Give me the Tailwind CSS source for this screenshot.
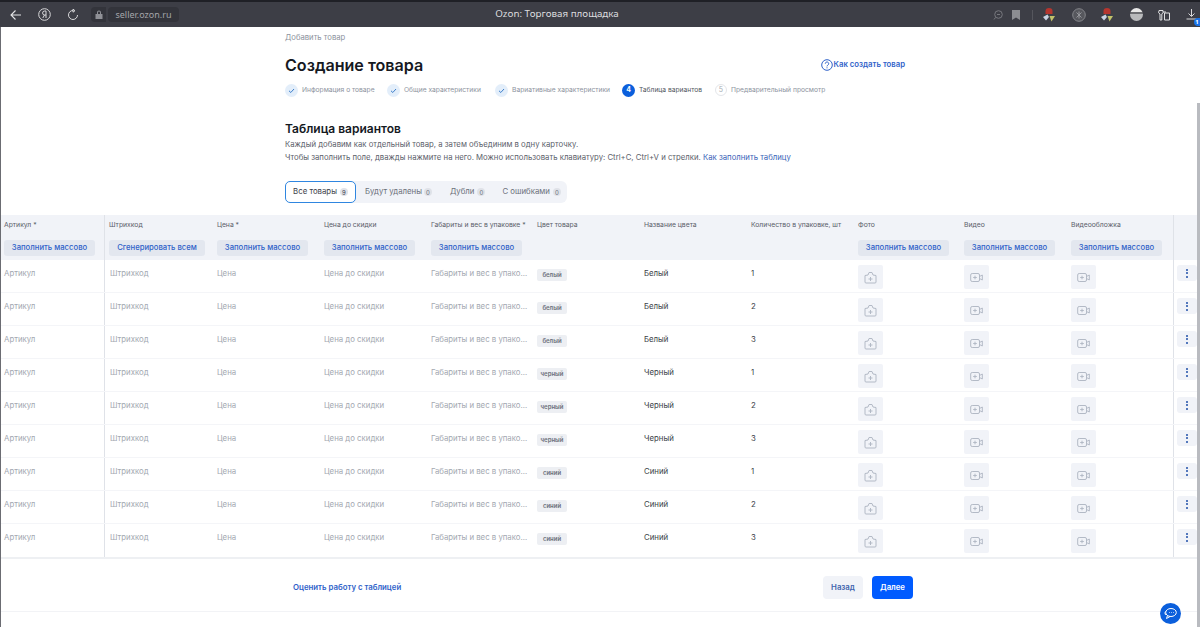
<!DOCTYPE html>
<html lang="ru">
<head>
    <meta charset="UTF-8">
    <script src="https://cdn.jsdelivr.net/npm/@tailwindcss/browser@4"></script>
    <title>Ozon: Торговая площадка</title>
</head>
<body class="h-[627px] w-[1200px] overflow-hidden bg-white font-[Inter,sans-serif] text-[#1b1f27]">
    <!-- browser bar -->
    <header class="flex h-[27px] items-center border-t-2 border-[#1f2026] bg-[#3d3e46] font-['Noto_Sans',sans-serif] text-[#d4d5d8]">
        <div class="flex w-[284px] items-center">
            <svg class="ml-[10px] h-3 w-3" viewBox="0 0 12 12" fill="none" stroke="#e4e4e6" stroke-width="1.1"><path d="M11 6H1M5.500 1.500 1 6l4.500 4.500"/></svg>
            <svg class="ml-[16px] h-[13px] w-[13px]" viewBox="0 0 13 13" fill="none" stroke="#d8d8da"><circle cx="6.500" cy="6.500" r="5.800"/><path d="M8 10V3H6.600a2 2 0 0 0 0 4H8M6.500 7 4.800 10"/></svg>
            <svg class="ml-[16px] h-3 w-3" viewBox="0 0 12 12" fill="none" stroke="#d8d8da"><path d="M6 1.500a4.500 4.500 0 1 0 4.500 4.500M6 .2v3L8 1.700z"/></svg>
            <div class="ml-[12px] flex h-[15px] w-[15px] items-center justify-center rounded-l-[4px] bg-[#33343b]">
                <svg class="h-[9px] w-[8px]" viewBox="0 0 8 9" fill="#8f9096"><path d="M2 4V2.500a2 2 0 0 1 4 0V4h1.500v5H.5V4zm1 0h2V2.500a1 1 0 0 0-2 0z"/></svg>
            </div>
            <div class="ml-[2px] flex h-[15px] w-[71px] items-center justify-center rounded-[4px] bg-[#33343b] text-[9px] text-[#a4a5aa]">seller.ozon.ru</div>
        </div>
        <div class="w-[546px] text-center text-[9.800px] text-[#dcdcdf]">Ozon: Торговая площадка</div>
        <div class="relative flex flex-1 items-center">
            <svg class="ml-[163px] h-[10px] w-[10px]" viewBox="0 0 10 10" fill="none" stroke="#77787e"><circle cx="5.500" cy="4.500" r="3.800"/><path d="M2.500 7.500 1 9.500M4 4.500h3"/></svg>
            <svg class="ml-[9px] h-[10px] w-[8px]" viewBox="0 0 8 10" fill="#8c8d92"><path d="M0 0h8v10L4 7.500 0 10z"/></svg>
            <div class="ml-[12px] h-[10px] w-px bg-[#55565d]"></div>
            <svg class="ml-[9px] h-[14px] w-[14px]" viewBox="0 0 14 14"><path d="M3.500 6V3a3.500 3 0 0 1 7 0v3z" fill="#b5362f"/><path d="M1 9l4.500-2.500L7 9l-3 3.500z" fill="#c9d3e3"/><path d="M7.500 8H13l-3.500 5.500z" fill="#c2c26a"/></svg>
            <svg class="ml-[16px] h-[14px] w-[14px]" viewBox="0 0 14 14" fill="none"><circle cx="7" cy="7" r="6.300" fill="#56575d" stroke="#85868b"/><path d="M4.500 4.500l5 5M9.500 4.500l-5 5M7 3.500v7" stroke="#95969b"/></svg>
            <svg class="ml-[14px] h-[14px] w-[14px]" viewBox="0 0 14 14"><path d="M3.500 6V3a3.500 3 0 0 1 7 0v3z" fill="#b5362f"/><path d="M1 9l4.500-2.500L7 9l-3 3.500z" fill="#c9d3e3"/><path d="M7.500 8H13l-3.500 5.500z" fill="#c2c26a"/></svg>
            <div class="ml-[16px] h-[13px] w-[13px] rounded-full bg-[linear-gradient(#e8e8e8_0_30%,#6d6e72_30%_45%,#b9babc_45%)]"></div>
            <svg class="ml-[15px] h-[12px] w-[12px]" viewBox="0 0 12 12" fill="none" stroke="#e0e0e2"><path d="M1 1.500h4v2.300L3.800 5v6H2V5L.6 3.800zM6.500 4h5v7h-5zM5 3h3"/></svg>
            <svg class="ml-[16px] h-[11px] w-[11px]" viewBox="0 0 11 11" fill="none" stroke="#d8d8da"><path d="M5.500 0v7M2.500 4.500l3 3 3-3M.5 10h10"/></svg>
            <div class="absolute top-[10px] right-0 flex h-[8px] w-[6px] items-center justify-center rounded-l-full bg-[#1a73e8] text-[6px] leading-none font-bold text-white">1</div>
        </div>
    </header>

    <main class="relative h-[600px] border-l border-[#6b6c72]">
        <!-- heading -->
        <div class="pl-[284px]">
            <p class="pt-[6px] text-[7.700px] leading-[10px] text-[#8d939e]">Добавить товар</p>
            <div class="mt-[10px] flex items-center justify-between pr-[295px]">
                <h1 class="text-[16.100px] leading-[24px] font-semibold text-[#15191f]">Создание товара</h1>
                <a class="flex items-center gap-px text-[7.750px] font-semibold text-[#2f62c9]">
                    <svg class="h-3 w-3" viewBox="0 0 12 12" fill="none" stroke="#2f62c9"><circle cx="6" cy="6" r="5.300"/><path d="M4.300 4.700a1.700 1.700 0 1 1 2.600 1.400c-.6.400-.9.700-.9 1.300M6 8.300v1"/></svg>
                    Как создать товар
                </a>
            </div>
            <!-- steps -->
            <div class="mt-[6px] flex h-[14px] items-center whitespace-nowrap text-[6.700px] text-[#8d939e]">
                <svg class="h-[13px] w-[13px]" viewBox="0 0 13 13"><circle cx="6.500" cy="6.500" r="6.500" fill="#e3eefa"/><path d="M4 6.800l1.800 1.700L9 5" fill="none" stroke="#3d7fcb"/></svg>
                <span class="ml-[4px] w-[85px]">Информация о товаре</span>
                <svg class="h-[13px] w-[13px]" viewBox="0 0 13 13"><circle cx="6.500" cy="6.500" r="6.500" fill="#e3eefa"/><path d="M4 6.800l1.800 1.700L9 5" fill="none" stroke="#3d7fcb"/></svg>
                <span class="ml-[4px] w-[91px]">Общие характеристики</span>
                <svg class="h-[13px] w-[13px]" viewBox="0 0 13 13"><circle cx="6.500" cy="6.500" r="6.500" fill="#e3eefa"/><path d="M4 6.800l1.800 1.700L9 5" fill="none" stroke="#3d7fcb"/></svg>
                <span class="ml-[4px] w-[110px]">Вариативные характеристики</span>
                <span class="flex h-[13px] w-[13px] items-center justify-center rounded-full bg-[#0b5fdc] text-[7px] font-bold text-white">4</span>
                <span class="ml-[4px] w-[76px] text-[#50555e]">Таблица вариантов</span>
                <span class="flex h-[12px] w-[12px] items-center justify-center rounded-full border border-[#e4e6ea] text-[7px] text-[#a8adb5]">5</span>
                <span class="ml-[4px]">Предварительный просмотр</span>
            </div>
            <h2 class="mt-[23px] text-[12px] leading-[18px] font-semibold text-[#15191f]">Таблица вариантов</h2>
            <p class="text-[7.750px] leading-[13px] text-[#5b606a]">Каждый добавим как отдельный товар, а затем объединим в одну карточку.</p>
            <p class="text-[7.750px] leading-[13px] text-[#5b606a]">Чтобы заполнить поле, дважды нажмите на него. Можно использовать клавиатуру: Ctrl+C, Ctrl+V и стрелки. <a class="text-[#3a63b8]">Как заполнить таблицу</a></p>
            <!-- tabs -->
            <div class="mt-[17px] flex h-[22px] w-[282px] items-center whitespace-nowrap rounded-[6px] bg-[#f1f3f8] text-[7.800px] text-[#6c717b]">
                <span class="flex h-[22px] w-[71px] items-center justify-center gap-[3px] rounded-[5px] border border-[#2f86e0] bg-white text-[#3c414a]">Все товары <b class="flex h-[8px] w-[8px] items-center justify-center rounded-full bg-[#dfe2e8] text-[6px] font-normal">9</b></span>
                <span class="ml-[9px] flex items-center gap-[2px]">Будут удалены <b class="flex h-[8px] w-[8px] items-center justify-center rounded-full bg-[#dfe2e8] text-[6px] font-normal">0</b></span>
                <span class="ml-[18px] flex items-center gap-[3px]">Дубли <b class="flex h-[8px] w-[8px] items-center justify-center rounded-full bg-[#dfe2e8] text-[6px] font-normal">0</b></span>
                <span class="ml-[17px] flex items-center gap-[3px]">С ошибками <b class="flex h-[8px] w-[8px] items-center justify-center rounded-full bg-[#dfe2e8] text-[6px] font-normal">0</b></span>
            </div>
        </div>

        <!-- table -->
        <div class="mt-[12px] w-[1198px]">
            <div class="grid h-[45px] grid-cols-[104px_107px_107px_107px_106px_107px_107px_107px_106px_107px_107px_25px] whitespace-nowrap bg-[#f1f3f8] text-[6.800px] leading-[10px] text-[#5b606a]">
                <div class="border-r border-[#dfe2e8] pt-[5px] pl-[3px]">Артикул *<button class="mt-[10px] block h-[16px] w-[91px] rounded-[3px] bg-[#e3e7ef] text-[7.700px] font-medium text-[#2f62c9]">Заполнить массово</button></div>
                <div class="pt-[5px] pl-[4px]">Штрихкод<button class="mt-[10px] block h-[16px] w-[96px] rounded-[3px] bg-[#e3e7ef] text-[7.700px] font-medium text-[#2f62c9]">Сгенерировать всем</button></div>
                <div class="pt-[5px] pl-[5px]">Цена *<button class="mt-[10px] block h-[16px] w-[91px] rounded-[3px] bg-[#e3e7ef] text-[7.700px] font-medium text-[#2f62c9]">Заполнить массово</button></div>
                <div class="pt-[5px] pl-[5px]">Цена до скидки<button class="mt-[10px] block h-[16px] w-[91px] rounded-[3px] bg-[#e3e7ef] text-[7.700px] font-medium text-[#2f62c9]">Заполнить массово</button></div>
                <div class="pt-[5px] pl-[5px]">Габариты и вес в упаковке *<button class="mt-[10px] block h-[16px] w-[91px] rounded-[3px] bg-[#e3e7ef] text-[7.700px] font-medium text-[#2f62c9]">Заполнить массово</button></div>
                <div class="pt-[5px] pl-[5px]">Цвет товара</div>
                <div class="pt-[5px] pl-[5px]">Название цвета</div>
                <div class="pt-[5px] pl-[5px]">Количество в упаковке, шт</div>
                <div class="pt-[5px] pl-[5px]">Фото<button class="mt-[10px] block h-[16px] w-[91px] rounded-[3px] bg-[#e3e7ef] text-[7.700px] font-medium text-[#2f62c9]">Заполнить массово</button></div>
                <div class="pt-[5px] pl-[5px]">Видео<button class="mt-[10px] block h-[16px] w-[91px] rounded-[3px] bg-[#e3e7ef] text-[7.700px] font-medium text-[#2f62c9]">Заполнить массово</button></div>
                <div class="pt-[5px] pl-[5px]">Видеообложка<button class="mt-[10px] block h-[16px] w-[91px] rounded-[3px] bg-[#e3e7ef] text-[7.700px] font-medium text-[#2f62c9]">Заполнить массово</button></div>
                <div class="border-l border-[#dfe2e8]"></div>
            </div>
            <div id="rows" class="border-b-2 border-[#eef0f3]"></div>
        </div>

        <!-- footer -->
        <div class="flex h-[53px] items-center border-b border-[#f2f3f6] pt-[5px]">
            <a class="ml-[292px] w-[530px] text-[7.800px] font-semibold text-[#2f62c9]">Оценить работу с таблицей</a>
            <button class="h-[23px] w-[40px] rounded-[4px] bg-[#f1f3f8] text-[7.800px] font-semibold text-[#3f63ad]">Назад</button>
            <button class="ml-[9px] h-[23px] w-[41px] rounded-[4px] bg-[#005bff] text-[7.800px] font-semibold text-white">Далее</button>
        </div>

        <!-- chat button and scrollbar lie over the page -->
        <div class="absolute top-[576px] left-[1159px] flex h-[21px] w-[21px] items-center justify-center rounded-full bg-[#0b5fdc]">
            <svg class="h-[13px] w-[13px]" viewBox="0 0 13 13" fill="none" stroke="#fff"><ellipse cx="7" cy="5.500" rx="5.300" ry="4"/><path d="M3.500 8.500 2.500 11.500 6 9.500M1.500 4.500C.8 5.500.8 7 1.800 8"/><path d="M5 5.500h.6M7 5.500h.6M9 5.500h.6"/></svg>
        </div>
        <div class="absolute top-[76px] right-0 h-[524px] w-[3px] bg-[#b9bbc0]"></div>
    </main>

    <script>
        const colors = [["белый", "Белый"], ["черный", "Черный"], ["синий", "Синий"]];
        const cell = "pt-[7px] pl-[5px]";
        const camera = '<svg class="h-[13px] w-[13px]" viewBox="0 0 13 13" fill="none" stroke="#b3bac6"><path d="M1 4.500 4 4l1-2.500h3L9 4l3 .5V11a1 1 0 0 1-1 1H2a1 1 0 0 1-1-1z"/><path d="M6.500 6v4M4.500 8h4"/></svg>';
        const video = '<svg class="h-[13px] w-[13px]" viewBox="0 0 13 13" fill="none" stroke="#b3bac6"><rect x=".7" y="2.500" width="8.800" height="8" rx="1.500"/><path d="M9.500 5.500 12.300 4v5l-2.800-1.500M5 4.700v3.600M3.200 6.500h3.600"/></svg>';
        const tile = (icon) => `<div class="pt-[5px] pl-[5px]"><div class="flex h-[24px] w-[25px] items-center justify-center rounded-[2px] bg-[#f1f3f8]">${icon}</div></div>`;
        let html = "";
        for (const [chip, name] of colors) {
            for (const qty of [1, 2, 3]) {
                html += `<div class="grid h-[33px] grid-cols-[104px_107px_107px_107px_106px_107px_107px_107px_106px_107px_107px_25px] border-b border-[#f4f5f8] text-[7.800px] leading-[13px] text-[#a3a8b1] last:border-b-0">
                    <div class="border-r border-[#dfe2e8] pt-[7px] pl-[3px]">Артикул</div>
                    <div class="pt-[7px] pl-[5px]">Штрихкод</div>
                    <div class="${cell}">Цена</div>
                    <div class="${cell}">Цена до скидки</div>
                    <div class="${cell} truncate pr-[3px]">Габариты и вес в упаковке</div>
                    <div class="pt-[9px] pl-[5px]"><span class="block h-[12px] w-[30px] overflow-hidden rounded-[2px] bg-[#edeff3] text-center text-[6px] leading-[12px] font-semibold text-[#6b707a]">${chip}</span></div>
                    <div class="${cell} text-[#3a3f48]">${name}</div>
                    <div class="${cell} text-[#3a3f48]">${qty}</div>
                    ${tile(camera)}${tile(video)}${tile(video)}
                    <div class="border-l border-[#dfe2e8] pt-[5px] pl-[3px]"><div class="flex h-[16px] w-[20px] flex-col items-center justify-center gap-[1.500px] rounded-[3px] bg-[#f1f3f8]"><i class="h-[2px] w-[2px] rounded-full bg-[#1f4fa8]"></i><i class="h-[2px] w-[2px] rounded-full bg-[#1f4fa8]"></i><i class="h-[2px] w-[2px] rounded-full bg-[#1f4fa8]"></i></div></div>
                </div>`;
            }
        }
        document.getElementById("rows").innerHTML = html;
    </script>
</body>
</html>
